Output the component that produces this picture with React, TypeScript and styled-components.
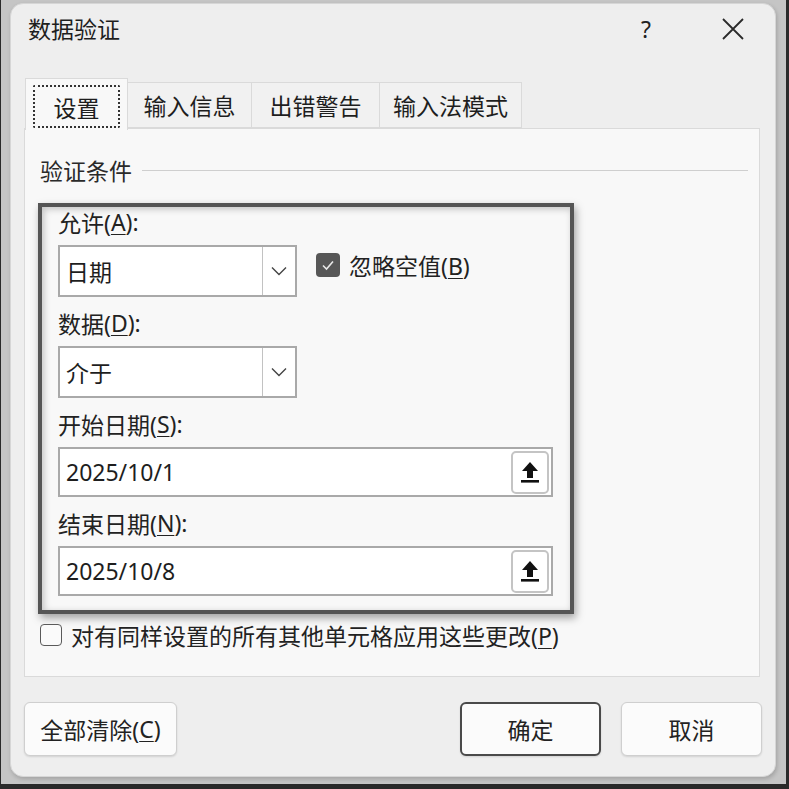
import React from 'react';
import styled, { createGlobalStyle } from 'styled-components';

const Global = createGlobalStyle`
  html, body { margin: 0; padding: 0; background: #2a2a2a; }
  body { font-family: "Noto Sans", "Noto Sans CJK SC", sans-serif; color: #1e1e1e; }
  * { box-sizing: border-box; }
`;

const Screen = styled.div`
  width: 789px;
  height: 789px;
  background: #2a2a2a;
  overflow: hidden;
`;

const Backdrop = styled.div`
  margin-left: 1px;
  width: 785px;
  height: 784px;
  background: #c5c5c5;
  padding: 3px 10px 7px 9px;
`;

const Window = styled.div`
  width: 766px;
  height: 774px;
  background: #eeeeee;
  border: 1px solid #d6d6d6;
  border-radius: 13px;
  display: flex;
  flex-direction: column;
  box-shadow: 1px 2px 4px rgba(0,0,0,0.18);
`;

const TitleBar = styled.div`
  height: 54px;
  display: flex;
  align-items: center;
  padding: 0 0 4px 17px;
  font-size: 23px;
`;

const Title = styled.div`
  flex: 1;
  line-height: 1;
`;

const TitleButton = styled.div<{ $w: number }>`
  width: ${p => p.$w}px;
  height: 40px;
  display: flex;
  align-items: center;
  justify-content: center;
  font-size: 23px;
  color: #222;
`;

const Body = styled.div`
  flex: 1;
  display: flex;
  flex-direction: column;
  padding: 0 15px 0 13px;
`;

const TabStrip = styled.div`
  margin-top: 20px;
  height: 50px;
  display: flex;
  align-items: flex-end;
  padding-left: 1px;
  position: relative;
  z-index: 2;
`;

const Tab = styled.div<{ $w: number; $active?: boolean }>`
  width: ${p => p.$w}px;
  height: ${p => (p.$active ? 52 : 46)}px;
  margin-bottom: ${p => (p.$active ? -2 : 0)}px;
  background: ${p => (p.$active ? '#f8f8f8' : '#f1f1f1')};
  border: 1px solid #dadada;
  border-bottom: ${p => (p.$active ? 'none' : '1px solid #dadada')};
  border-left: ${p => (p.$active ? '1px solid #dadada' : 'none')};
  display: flex;
  align-items: center;
  justify-content: center;
  font-size: 23px;
  padding: ${p => (p.$active ? '6px 7px 2px' : '0')};
`;

const FocusRect = styled.div`
  width: 100%;
  height: 100%;
  border: 2px dotted #333;
  border-radius: 2px;
  display: flex;
  align-items: center;
  justify-content: center;
`;

const Panel = styled.div`
  height: 549px;
  background: #f8f8f8;
  border: 1px solid #dadada;
  padding: 0 11px 0 15px;
  display: flex;
  flex-direction: column;
`;

const GroupHeader = styled.div`
  margin-top: 26px;
  height: 30px;
  display: flex;
  align-items: center;
  gap: 10px;
  font-size: 23px;
  color: #2a2a2a;
`;

const GroupLine = styled.div`
  flex: 1;
  height: 1px;
  background: #cfcfcf;
`;

const Highlight = styled.div`
  margin-top: 18px;
  margin-left: -2px;
  width: 536px;
  height: 411px;
  border: 4px solid #555;
  box-shadow: 2px 4px 8px rgba(0,0,0,0.35), inset 2px 2px 7px rgba(0,0,0,0.22);
  padding: 0 17px 0 16px;
  display: flex;
  flex-direction: column;
  gap: 11px;
`;

const Field = styled.div`
  display: flex;
  flex-direction: column;
  gap: 8px;
`;

const Label = styled.div`
  height: 30px;
  display: flex;
  align-items: center;
  font-size: 23px;
  color: #222;
  u { text-underline-offset: 3px; text-decoration-thickness: 1px; }
`;

const Row = styled.div`
  display: flex;
  align-items: center;
`;

const Select = styled.div`
  width: 239px;
  height: 52px;
  background: #fff;
  border: 2px solid #a9a9a9;
  display: flex;
  font-size: 23px;
`;

const SelectValue = styled.div`
  flex: 1;
  display: flex;
  align-items: center;
  padding-left: 6px;
`;

const DropButton = styled.div`
  width: 33px;
  border-left: 1px solid #c2c2c2;
  display: flex;
  align-items: center;
  justify-content: center;
`;

const Check = styled.div<{ $checked?: boolean }>`
  width: ${p => (p.$checked ? 24 : 22)}px;
  height: ${p => (p.$checked ? 24 : 22)}px;
  border-radius: 4px;
  background: ${p => (p.$checked ? '#575757' : '#fafafa')};
  border: ${p => (p.$checked ? 'none' : '1.5px solid #5a5a5a')};
  display: flex;
  align-items: center;
  justify-content: center;
  flex-shrink: 0;
`;

const CheckLabel = styled.div`
  font-size: 23px;
  color: #222;
  margin-left: 9px;
  u { text-underline-offset: 3px; text-decoration-thickness: 1px; }
`;

const InputBox = styled.div`
  width: 495px;
  height: 50px;
  background: #fff;
  border: 2px solid #a9a9a9;
  display: flex;
  align-items: center;
  padding: 0 2px 0 6px;
  font-size: 23px;
`;

const InputValue = styled.div`
  flex: 1;
`;

const RefButton = styled.div`
  width: 38px;
  height: 43px;
  border: 2px solid #c4c4c4;
  border-radius: 5px;
  background: #fff;
  display: flex;
  align-items: center;
  justify-content: center;
`;

const ApplyRow = styled.div`
  margin-top: 8px;
  height: 26px;
  display: flex;
  align-items: center;
`;

const ButtonRow = styled.div`
  margin-top: 25px;
  margin-right: -2px;
  display: flex;
  align-items: center;
  gap: 20px;
`;

const Spacer = styled.div`
  flex: 1;
`;

const Button = styled.div<{ $w: number; $primary?: boolean }>`
  width: ${p => p.$w}px;
  height: 54px;
  border-radius: 6px;
  background: #fbfbfb;
  border: ${p => (p.$primary ? '2px solid #4a4a4a' : '1.5px solid #cfcfcf')};
  box-shadow: 0 1px 2px rgba(0,0,0,0.12);
  display: flex;
  align-items: center;
  justify-content: center;
  font-size: 23px;
  color: #222;
  u { text-underline-offset: 3px; text-decoration-thickness: 1px; }
`;

const Chevron = () => (
  <svg width="16" height="10" viewBox="0 0 16 10">
    <polyline points="1,1.5 8,8.5 15,1.5" fill="none" stroke="#444" strokeWidth="1.4" />
  </svg>
);

const CheckMark = () => (
  <svg width="14" height="12" viewBox="0 0 14 12">
    <polyline points="2,6.5 5.5,10 12,2.5" fill="none" stroke="#e8e8e8" strokeWidth="1.6" />
  </svg>
);

const UploadIcon = () => (
  <svg width="20" height="24" viewBox="0 0 20 24">
    <path d="M10 2 L2 11 H7 V18 H13 V11 H18 Z" fill="#111" />
    <rect x="1" y="20" width="18" height="2.6" fill="#111" />
  </svg>
);

const CloseIcon = () => (
  <svg width="24" height="24" viewBox="0 0 24 24">
    <path d="M2 2 L22 22 M22 2 L2 22" stroke="#2a2a2a" strokeWidth="1.8" fill="none" />
  </svg>
);

export default function App() {
  return (
    <Screen>
      <Global />
      <Backdrop>
        <Window>
          <TitleBar>
            <Title>数据验证</Title>
            <TitleButton $w={40}>?</TitleButton>
            <TitleButton $w={53} />
            <TitleButton $w={28}><CloseIcon /></TitleButton>
            <TitleButton $w={28} />
          </TitleBar>
          <Body>
            <TabStrip>
              <Tab $w={103} $active><FocusRect>设置</FocusRect></Tab>
              <Tab $w={124}>输入信息</Tab>
              <Tab $w={128}>出错警告</Tab>
              <Tab $w={142}>输入法模式</Tab>
            </TabStrip>
            <Panel>
              <GroupHeader>
                验证条件
                <GroupLine />
              </GroupHeader>
              <Highlight>
                <Field>
                  <Label>允许(<u>A</u>):</Label>
                  <Row>
                    <Select>
                      <SelectValue>日期</SelectValue>
                      <DropButton><Chevron /></DropButton>
                    </Select>
                    <Check $checked style={{ marginLeft: 19, marginTop: -12 }}><CheckMark /></Check>
                    <CheckLabel style={{ marginTop: -12 }}>忽略空值(<u>B</u>)</CheckLabel>
                  </Row>
                </Field>
                <Field>
                  <Label>数据(<u>D</u>):</Label>
                  <Select>
                    <SelectValue>介于</SelectValue>
                    <DropButton><Chevron /></DropButton>
                  </Select>
                </Field>
                <Field>
                  <Label>开始日期(<u>S</u>):</Label>
                  <InputBox>
                    <InputValue>2025/10/1</InputValue>
                    <RefButton><UploadIcon /></RefButton>
                  </InputBox>
                </Field>
                <Field>
                  <Label>结束日期(<u>N</u>):</Label>
                  <InputBox>
                    <InputValue>2025/10/8</InputValue>
                    <RefButton><UploadIcon /></RefButton>
                  </InputBox>
                </Field>
              </Highlight>
              <ApplyRow>
                <Check />
                <CheckLabel>对有同样设置的所有其他单元格应用这些更改(<u>P</u>)</CheckLabel>
              </ApplyRow>
            </Panel>
            <ButtonRow>
              <Button $w={153}>全部清除(<u>C</u>)</Button>
              <Spacer />
              <Button $w={141} $primary>确定</Button>
              <Button $w={141}>取消</Button>
            </ButtonRow>
          </Body>
        </Window>
      </Backdrop>
    </Screen>
  );
}
